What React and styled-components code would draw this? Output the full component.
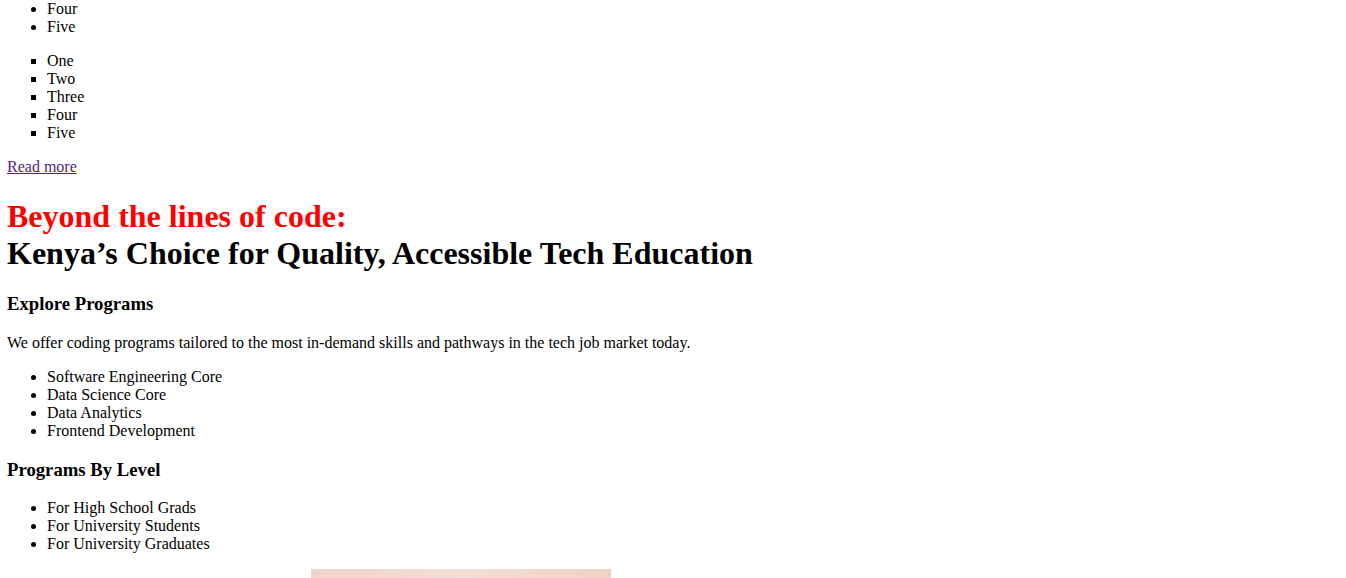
import styled, { createGlobalStyle } from "styled-components";

const Global = createGlobalStyle`
  body {
    margin: 0.4px 8px 8px 7px;
    font-family: "Liberation Serif", "Times New Roman", serif;
    font-size: 16px;
    color: #000;
    background: #fff;
  }
`;

const List = styled.ul`
  margin: ${(p) => (p.$first ? "0 0 16px" : "16px 0")};
  padding-left: 40px;
  list-style: ${(p) => p.$kind || "disc"};
`;

const Link = styled.a`
  color: #551a8b;
  text-decoration: underline;
`;

const Headline = styled.h1`
  font-size: 32px;
  font-weight: bold;
  margin: 21.44px 0;
`;

const Accent = styled.span`
  color: #ff0000;
`;

const SubHead = styled.h3`
  font-size: 18.72px;
  font-weight: bold;
  margin: 18.72px 0;
`;

const Para = styled.p`
  margin: 16px 0;
`;

const Gallery = styled.div`
  display: flex;
  gap: 4px;
`;

const Picture = styled.div`
  width: 300px;
  height: 200px;
  background: ${(p) =>
    p.$blank
      ? "transparent"
      : "linear-gradient(90deg, #efd4c9 0%, #f2ded5 50%, #efd2c4 100%)"};
`;

export default function App() {
  return (
    <>
      <Global />
      <List $first>
        <li>Four</li>
        <li>Five</li>
      </List>
      <List $kind="square">
        <li>One</li>
        <li>Two</li>
        <li>Three</li>
        <li>Four</li>
        <li>Five</li>
      </List>
      <Link href="#">Read more</Link>
      <Headline>
        <Accent>Beyond the lines of code:</Accent>
        <br />
        Kenya’s Choice for Quality, Accessible Tech Education
      </Headline>
      <SubHead>Explore Programs</SubHead>
      <Para>
        We offer coding programs tailored to the most in-demand skills and
        pathways in the tech job market today.
      </Para>
      <List>
        <li>Software Engineering Core</li>
        <li>Data Science Core</li>
        <li>Data Analytics</li>
        <li>Frontend Development</li>
      </List>
      <SubHead>Programs By Level</SubHead>
      <List>
        <li>For High School Grads</li>
        <li>For University Students</li>
        <li>For University Graduates</li>
      </List>
      <Gallery>
        <Picture $blank />
        <Picture />
      </Gallery>
    </>
  );
}
